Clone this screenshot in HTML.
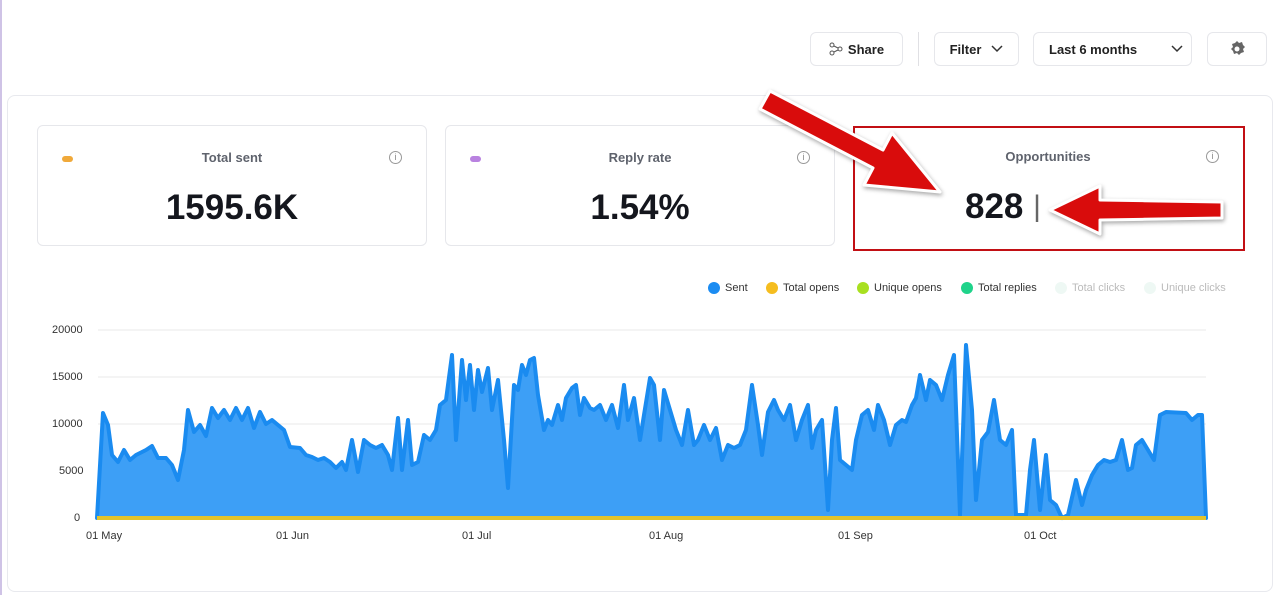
<!DOCTYPE html>
<html><head><meta charset="utf-8"><style>
*{margin:0;padding:0;box-sizing:border-box}
body{width:1280px;height:595px;background:#fff;font-family:"Liberation Sans",sans-serif;position:relative;overflow:hidden;color:#1b1d24}
.lb{position:absolute;left:0;top:0;width:2px;height:595px;background:#cfc3e6}
.btn{position:absolute;top:32px;height:34px;border:1px solid #e6e7eb;border-radius:6px;font-size:13px;font-weight:bold;color:#222;display:flex;align-items:center;justify-content:center}
.panel{position:absolute;left:7px;top:95px;width:1266px;height:497px;border:1px solid #e8e9ee;border-radius:8px}
.card{position:absolute;top:125px;width:390px;height:121px;border:1px solid #e6e7eb;border-radius:6px}
.card .t{position:absolute;top:24px;width:100%;text-align:center;font-size:13px;color:#5f636d;font-weight:bold}
.card .v{position:absolute;top:62px;width:100%;text-align:center;font-size:35px;font-weight:bold;color:#14161d}
.card .i{position:absolute;right:24px;top:25px;width:13px;height:13px;border:1px solid #999;border-radius:50%;font-size:9px;color:#888;text-align:center;line-height:11px}
.card .d{position:absolute;left:24px;top:30px;width:11px;height:6px;border-radius:3px}
.lg{position:absolute;top:282px;font-size:11px;color:#333;display:flex;align-items:center}
.lg i{display:inline-block;width:12px;height:12px;border-radius:50%;margin-right:5px}
.ax{position:absolute;font-size:11px;color:#333}
</style></head><body>
<div class="lb"></div>
<div class="btn" style="left:810px;width:93px"><svg width="14" height="14" viewBox="0 0 14 14" style="margin-right:5px" fill="none" stroke="#555" stroke-width="1"><circle cx="3" cy="3" r="2"/><circle cx="3" cy="11" r="2"/><circle cx="11" cy="7" r="2"/><path d="M5 4l4 2M5 10l4-2"/></svg>Share</div>
<div style="position:absolute;left:918px;top:32px;width:1px;height:34px;background:#e0e0e4"></div>
<div class="btn" style="left:934px;width:85px">Filter<svg width="12" height="8" style="margin-left:10px"><path d="M1 1l5 5 5-5" stroke="#333" stroke-width="1.5" fill="none"/></svg></div>
<div class="btn" style="left:1033px;width:159px;justify-content:flex-start;padding-left:15px">Last 6 months<svg width="12" height="8" style="margin-left:34px"><path d="M1 1l5 5 5-5" stroke="#333" stroke-width="1.5" fill="none"/></svg></div>
<div class="btn" style="left:1207px;width:60px"><svg width="18" height="18" viewBox="0 0 18 18"><path fill="#666" d="M9 1l2 2 3-1 1 3 2 2-2 2 1 3-3 1-2 2-2-2-3 1-1-3-2-2 2-2-1-3 3-1z"/><circle cx="9" cy="9" r="2.5" fill="#fff"/></svg></div>
<div class="panel"></div>
<div class="card" style="left:37px"><div class="d" style="background:#f0a93a"></div><div class="t">Total sent</div><div class="v">1595.6K</div><div class="i">i</div></div>
<div class="card" style="left:445px"><div class="d" style="background:#b982e0"></div><div class="t">Reply rate</div><div class="v">1.54%</div><div class="i">i</div></div>
<div class="card" style="left:853px;border:none"><div class="t">Opportunities</div><div class="v" style="left:112px;width:auto;text-align:left">828 <span style="font-weight:normal;color:#666;font-size:30px;position:relative;top:-2px">|</span></div><div class="i">i</div></div>
<div style="position:absolute;left:853px;top:126px;width:392px;height:125px;border:2px solid #c20f14"></div>
<div class="lg" style="left:708px"><i style="background:#1b8cf2"></i>Sent</div>
<div class="lg" style="left:766px"><i style="background:#f5bd1f"></i>Total opens</div>
<div class="lg" style="left:857px"><i style="background:#a8e020"></i>Unique opens</div>
<div class="lg" style="left:961px"><i style="background:#1fd38a"></i>Total replies</div>
<div class="lg" style="left:1055px;color:#bbb"><i style="background:#eef8f4"></i>Total clicks</div>
<div class="lg" style="left:1144px;color:#bbb"><i style="background:#eef8f4"></i>Unique clicks</div>
<div class="ax" style="left:52px;top:324px">20000</div>
<div class="ax" style="left:52px;top:371px">15000</div>
<div class="ax" style="left:52px;top:418px">10000</div>
<div class="ax" style="left:59px;top:465px">5000</div>
<div class="ax" style="left:74px;top:512px">0</div>
<div class="ax" style="left:86px;top:530px">01 May</div>
<div class="ax" style="left:276px;top:530px">01 Jun</div>
<div class="ax" style="left:462px;top:530px">01 Jul</div>
<div class="ax" style="left:649px;top:530px">01 Aug</div>
<div class="ax" style="left:838px;top:530px">01 Sep</div>
<div class="ax" style="left:1024px;top:530px">01 Oct</div>
<svg width="1280" height="595" style="position:absolute;left:0;top:0">
<g stroke="#e8e8ea" stroke-width="1"><path d="M98 330H1206M98 377H1206M98 424H1206M98 471H1206"/></g>
<polygon fill="#3d9ff6" stroke="#1a8bf0" stroke-width="4" stroke-linejoin="round" points="97,518 103,413 108,425 112,455 118,462 124,450 130,460 136,455 146,450 152,446 158,458 166,458 172,465 178,480 184,450 188,410 194,432 200,425 206,436 212,408 218,418 224,410 230,420 236,408 242,420 248,408 254,428 260,412 266,424 272,420 278,425 284,430 290,447 300,448 306,455 312,457 318,460 324,458 330,462 336,468 342,462 346,470 352,440 358,472 364,440 370,445 376,448 382,445 388,455 392,470 398,418 402,470 408,420 412,465 418,462 424,435 430,440 436,430 440,405 446,400 452,355 456,440 462,360 466,400 470,365 474,410 478,370 482,392 488,368 492,410 498,380 504,440 508,488 514,385 518,390 522,365 526,375 530,360 534,358 538,395 544,430 548,420 552,425 558,405 562,420 566,398 572,388 576,385 580,415 584,398 590,408 594,410 600,405 606,420 612,405 618,428 624,385 628,420 634,398 640,440 644,415 650,378 654,385 660,440 664,390 670,410 676,430 682,445 688,410 694,445 698,440 704,425 710,440 716,428 722,460 728,445 734,448 740,445 746,430 752,385 758,425 762,455 768,412 774,400 778,410 784,420 790,405 796,440 802,420 808,405 812,448 816,430 822,420 828,510 832,440 836,408 840,460 846,465 852,470 856,440 862,415 868,410 874,430 878,405 884,420 890,445 896,425 902,420 906,422 912,405 916,398 920,375 926,400 930,380 936,385 942,400 948,375 954,355 960,515 966,345 972,410 976,500 982,440 988,432 994,400 1000,440 1006,445 1012,430 1016,515 1026,515 1030,470 1034,440 1040,510 1046,455 1050,500 1056,505 1062,518 1068,515 1076,480 1082,505 1086,490 1092,475 1098,465 1104,460 1110,462 1116,460 1122,440 1128,470 1132,468 1136,445 1142,440 1148,450 1154,460 1160,415 1166,412 1186,413 1192,420 1198,415 1202,415 1206,518"/>
<path d="M97 518H1206" stroke="#e3c32a" stroke-width="4"/>
<g fill="#d90c0c" stroke="#fff" stroke-width="3" stroke-linejoin="round" style="filter:drop-shadow(1px 2px 2px rgba(0,0,0,.35))">
<polygon points="770,91 883,150 892,133 940,192 864,185 873,168 760,109"/>
<polygon points="1222,202 1100,200 1100,186 1050,210 1100,234 1100,220 1222,218"/>
</g>
</svg>
</body></html>
